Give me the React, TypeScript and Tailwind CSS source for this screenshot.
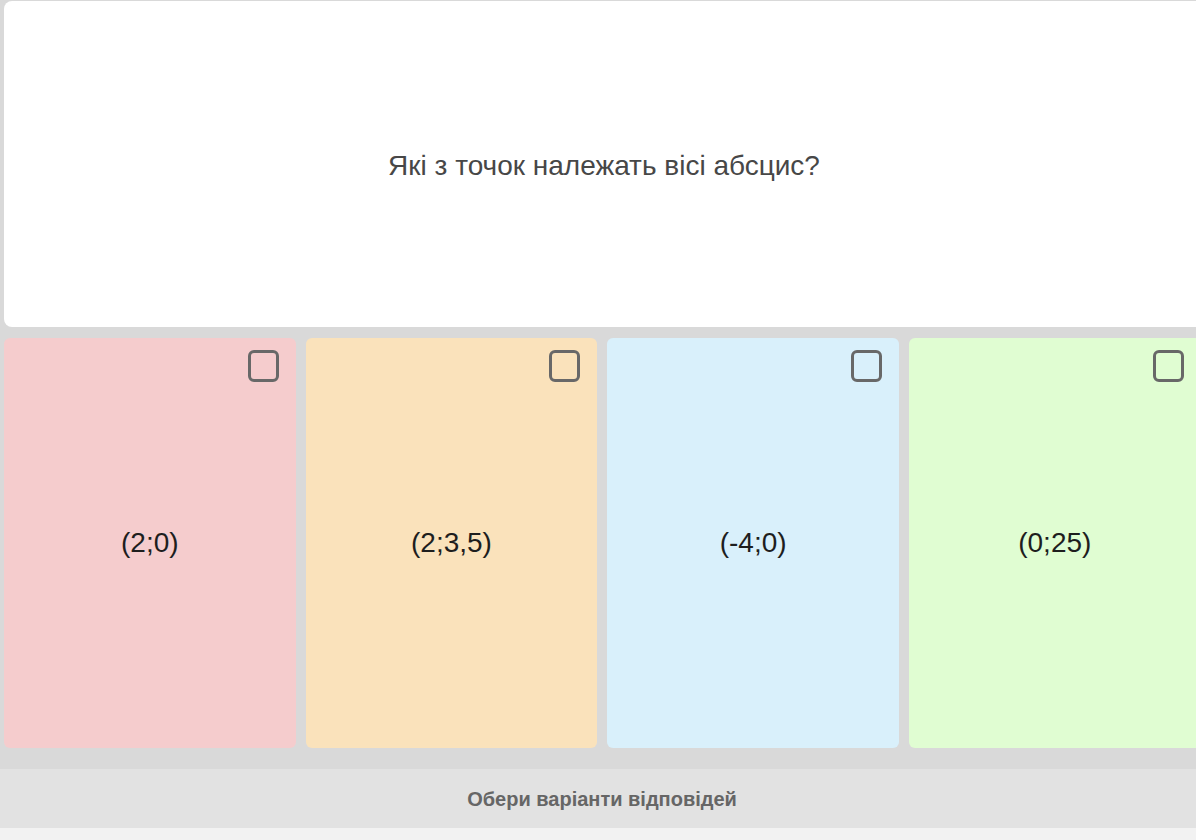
import React from 'react';

const options = [
  { label: '(2;0)', bg: 'bg-[#f5cccd]' },
  { label: '(2;3,5)', bg: 'bg-[#fae2bb]' },
  { label: '(-4;0)', bg: 'bg-[#d9f0fb]' },
  { label: '(0;25)', bg: 'bg-[#e0fdd2]' },
];

const App: React.FC = () => {
  return (
    <div className="w-[1196px] h-[840px] overflow-hidden bg-[#f2f2f2] font-['Liberation_Sans',Arial,sans-serif]">
      <div className="w-[1204px] bg-[#d9d9d9] pt-px pl-1 pb-[21px]">
        {/* Question */}
        <div className="h-[326px] bg-white rounded-lg flex items-center justify-center pt-1">
          <p className="text-[28px] text-[#474747]">Які з точок належать вісі абсцис?</p>
        </div>

        {/* Answers */}
        <div className="mt-[11px] flex gap-[10px]">
          {options.map((o) => (
            <div key={o.label} className={`relative w-[291.67px] shrink-0 h-[410px] rounded-md ${o.bg} flex items-center justify-center`}>
              <div className="absolute top-3 right-[17px] w-[31px] h-[32px] border-[3px] border-[#686868] rounded-md" />
              <span className="text-[28px] text-[#1e1e1e]">{o.label}</span>
            </div>
          ))}
        </div>
      </div>

      {/* Footer */}
      <div className="w-[1204px] h-[59px] bg-[#e2e2e2] flex items-center justify-center">
        <span className="text-[20px] font-bold text-[#666666]">Обери варіанти відповідей</span>
      </div>
    </div>
  );
};

export default App;
